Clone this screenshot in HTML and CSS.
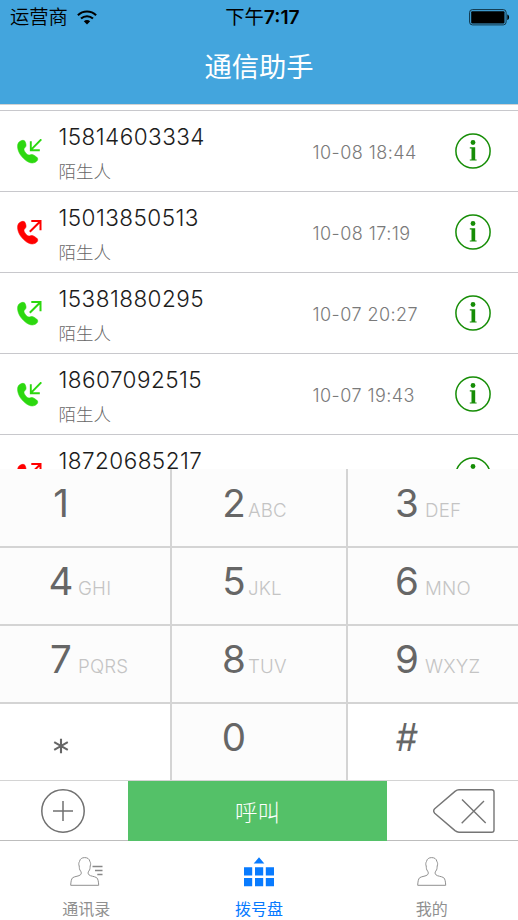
FILE: index.html
```html
<!DOCTYPE html>
<html lang="zh-CN">
<head>
<meta charset="utf-8">
<title>通信助手</title>
<link rel="stylesheet" href="styles.css">
</head>
<body>
<svg class="defs" width="0" height="0">
  <symbol id="phone" viewBox="0 0 26 26"><path fill="currentColor" stroke="currentColor" stroke-width=".6" d="M4.500 1.600C6.600.9 7.900 1.500 8.500 3.500c.9 2.800.7 4-.7 5.200-1.300 1.100-1 2.400.2 4.300 1.500 2.300 2.900 3.300 4.600 3 1.700-.6 2.700-.8 4.300.2l2.700 1.800c1.700 1.300 1.400 3.200-.3 4.500-3.200 2.500-7.500 1.700-11.500-2C3.500 17 .8 12.300.6 7.600.5 4.700 1.600 2.600 4.500 1.600z"/></symbol>
  <symbol id="in" viewBox="0 0 26 26"><use href="#phone"/><path fill="none" stroke="currentColor" stroke-width="1.900" d="M24.300.3 14.200 10.600M13.800 2.200v9h9"/></symbol>
  <symbol id="out" viewBox="0 0 26 26"><use href="#phone"/><path fill="none" stroke="currentColor" stroke-width="2" d="M12.800 11.800 23.100 1.500M14.300 1h9.200v9.300"/></symbol>
  <symbol id="info" viewBox="0 0 36 36"><circle cx="18" cy="18" r="17.100" fill="none" stroke="currentColor" stroke-width="1.500"/><circle cx="18" cy="9.500" r="2.400" fill="currentColor"/><path fill="currentColor" d="M14.800 14.200h5.400v12.200h1.400v1.200h-6.800v-1.200h1.700V15.400h-1.700z"/></symbol>
  <symbol id="person" viewBox="0 0 30 30"><path fill="none" stroke="currentColor" stroke-width="1" d="M.7 28.300h28c-.2-3.400-.5-6.200-2-7.600-2.600-1.600-6.200-1.300-7.900-3-.9-1.100-.9-2.200-.1-3.500 1.500-1.600 1.300-3.400 1.500-5.200.7-1.700.5-3.300-.3-4.500C19.400 1.800 17.400.6 14.700.6S10 1.800 9.500 4.500c-.8 1.200-1 2.800-.3 4.500.2 1.800 0 3.600 1.500 5.200.8 1.300.8 2.400-.1 3.500-1.700 1.700-5.300 1.400-7.900 3-1.500 1.400-1.800 4.200-2 7.600z"/></symbol>
</svg>
<div class="app">
  <header class="header">
    <div class="status">
      <div class="carrier"><span>运营商</span><svg class="wifi" viewBox="0 0 20 15"><g fill="none" stroke="#000" stroke-width="2.100"><path d="M.9 5.300C6 .3 14 .3 19.100 5.300"/><path d="M4 8.600c3.500-3.200 8.500-3.200 12 0"/></g><path d="M6.800 11.200c1.900-1.600 4.500-1.600 6.400 0L10 14.500z"/></svg></div>
      <div class="time">下午<b>7:17</b></div>
      <svg class="battery" viewBox="0 0 41 17"><rect x=".6" y=".6" width="36.500" height="15.300" rx="2.800" fill="none" stroke="#103346" stroke-width="1"/><rect x="2.200" y="2.200" width="33.300" height="12.200" rx="1" /><path d="M38.300 5.500c2.400.5 2.400 5 0 5.500z"/></svg>
    </div>
    <h1>通信助手</h1>
  </header>
  <main class="calls">
    <article class="call"><svg class="kind ok"><use href="#in"/></svg><div class="who"><div class="num">15814603334</div><div class="name">陌生人</div></div><time>10-08 18:44</time><svg class="info"><use href="#info"/></svg></article>
    <article class="call"><svg class="kind missed"><use href="#out"/></svg><div class="who"><div class="num">15013850513</div><div class="name">陌生人</div></div><time>10-08 17:19</time><svg class="info"><use href="#info"/></svg></article>
    <article class="call"><svg class="kind ok"><use href="#out"/></svg><div class="who"><div class="num">15381880295</div><div class="name">陌生人</div></div><time>10-07 20:27</time><svg class="info"><use href="#info"/></svg></article>
    <article class="call"><svg class="kind ok"><use href="#in"/></svg><div class="who"><div class="num">18607092515</div><div class="name">陌生人</div></div><time>10-07 19:43</time><svg class="info"><use href="#info"/></svg></article>
    <article class="call"><svg class="kind missed"><use href="#out"/></svg><div class="who"><div class="num">18720685217</div></div><svg class="info"><use href="#info"/></svg></article>
  </main>
  <section class="keypad">
    <div class="key"><b>1</b></div><div class="key mid"><b>2</b><span>ABC</span></div><div class="key"><b>3</b><span>DEF</span></div>
    <div class="key"><b>4</b><span>GHI</span></div><div class="key mid"><b>5</b><span>JKL</span></div><div class="key"><b>6</b><span>MNO</span></div>
    <div class="key"><b>7</b><span>PQRS</span></div><div class="key mid"><b>8</b><span>TUV</span></div><div class="key"><b>9</b><span>WXYZ</span></div>
    <div class="key plain"><svg class="star" viewBox="0 0 16 16"><path fill="none" stroke="#666" stroke-width="2.100" d="M8 .7v14.600M1.200 4.200l13.600 7.600M14.800 4.200 1.200 11.800"/></svg></div><div class="key mid"><b>0</b></div><div class="key plain"><b class="hash">#</b></div>
  </section>
  <section class="actions">
    <div class="side add"><svg viewBox="0 0 44 44" width="44" height="44"><g fill="none" stroke="#707070" stroke-width="1.500"><circle cx="22" cy="22" r="21.200"/><path d="M22 12v20M12 22h20"/></g></svg></div>
    <button class="dial">呼叫</button>
    <div class="side del"><svg viewBox="0 0 62 44" width="62" height="44"><g fill="none" stroke="#757575" stroke-width="1.400"><path d="M26 .8h32.800q2.200 0 2.200 2.200v38q0 2.200-2.200 2.200H26q-2 0-4-1.600L1.700 24.200q-2-2.200 0-4.400L22 2.400Q24 .8 26 .8z"/><path d="m29 10.500 23.700 23.500M51 12 28.700 34.300"/></g></svg></div>
  </section>
  <nav class="tabs">
    <div class="tab"><svg viewBox="0 0 33 30" width="33" height="30"><use href="#person" width="30" height="30"/><path stroke="#888" stroke-width="1.300" d="M22.500 9.500h10M25 13.500h7.500M27.300 17.500h5.200"/></svg><span>通讯录</span></div>
    <div class="tab active"><svg viewBox="0 0 30 30" width="30" height="30"><path fill="currentColor" d="m15 .3 5.300 6.300H9.700zM0 10.300h8.200v8.200H0zM11 10.300h8.200v8.200H11zM21.800 10.300H30v8.200h-8.200zM0 21h8.200v8.200H0zM11 21h8.200v8.200H11zM21.800 21H30v8.200h-8.200z"/></svg><span>拨号盘</span></div>
    <div class="tab"><svg viewBox="0 0 30 30" width="30" height="30"><use href="#person" width="30" height="30"/></svg><span>我的</span></div>
  </nav>
</div>
</body>
</html>
```
FILE: styles.css
```css
* { box-sizing: border-box; }
body { margin: 0; font-family: Inter, "Noto Sans CJK SC", sans-serif; background: #fff; }
svg { display: block; flex: none; }
.defs { position: absolute; }
.app { width: 518px; height: 920px; display: flex; flex-direction: column; overflow: hidden; }
.header { height: 104px; background: #43a5dd; flex: none; }
.status { height: 33px; display: grid; grid-template-columns: 1fr auto 1fr; align-items: center; padding: 0 8px 0 10px; font-size: 19.300px; line-height: 33px; color: #000; }
.carrier { display: flex; align-items: center; gap: 9px; font-weight: 350; }
.wifi { width: 20px; height: 15px; }
.time { padding-left: 5px; }
.carrier span, .time { padding-top: 1px; }
.time b { font-weight: 600; }
.battery { width: 41px; height: 17px; justify-self: end; }
h1 { margin: 12px 0 0; text-align: center; color: #fff; font-size: 27.300px; line-height: 46px; font-weight: 400; }
.calls { height: 365px; padding-top: 5px; border-top: 1px solid #d2d2d2; overflow: hidden; flex: none; }
.call { height: 81px; border-top: 1px solid #c8c8cc; display: grid; grid-template-columns: 41.500px 254px 142.500px 36px; align-items: start; padding-left: 17px; }
.kind { width: 26px; height: 26px; margin-top: 28px; }
.ok { color: #2cd80f; }
.missed { color: #f00; }
.num { margin-top: 10px; font-size: 22.500px; line-height: 32px; letter-spacing: .45px; font-weight: 350; color: #1c1c1c; white-space: nowrap; }
.name { margin-top: 5px; font-size: 17.500px; line-height: 28px; font-weight: 300; color: #666; }
.call time { margin-top: 28px; font-size: 18px; line-height: 28px; letter-spacing: .45px; color: #7a7a7a; font-weight: 350; white-space: nowrap; }
.info { width: 36px; height: 36px; margin-top: 22px; color: #168d06; grid-column: 4; }
.keypad { height: 312px; display: grid; grid-template-columns: 170px 178px 170px; grid-template-rows: 79px 78px 78px 77px; flex: none; }
.key { display: flex; align-items: baseline; gap: 3px; padding: 10px 0 0 47px; background: #fcfcfc; border-bottom: 2px solid #d4d4d4; white-space: nowrap; }
.key:nth-child(-n+3) { padding-top: 11px; }
.key:nth-last-child(-n+3) { border-bottom-width: 1px; }
.key.mid { border-left: 2px solid #d4d4d4; border-right: 2px solid #d4d4d4; padding-left: 48px; gap: 0; }
.key:nth-child(3n) { padding-left: 45px; gap: 4px; }
.key.plain { background: #fff; }
.key b { width: 28px; display: flex; justify-content: center; font-size: 38.500px; line-height: 46px; font-weight: 400; color: #666; }
.key .hash { transform: skewX(-3deg) scaleX(.9); }
.key span { font-size: 18.700px; font-weight: 300; letter-spacing: .2px; color: #c4c4c4; }
.star { width: 16px; height: 16px; margin: 24px 0 0 6px; }
.actions { height: 60px; display: grid; grid-template-columns: 128px 259px 131px; border-bottom: 1px solid #bdbdbd; flex: none; }
.side { display: flex; align-items: center; }
.add { padding-left: 41px; }
.del { padding-left: 46px; }
.dial { height: 60px; border: 0; padding: 0; background: #54c168; color: #fff; font: 300 22.500px/58px "Noto Sans CJK SC", sans-serif; }
.tabs { height: 79px; display: grid; grid-template-columns: repeat(3, 1fr); flex: none; }
.tab { display: flex; flex-direction: column; align-items: center; padding-top: 16px; color: #909090; font-size: 16px; }
.tab span { line-height: 24px; margin-top: 10px; }
.active { color: #087bff; }
```
